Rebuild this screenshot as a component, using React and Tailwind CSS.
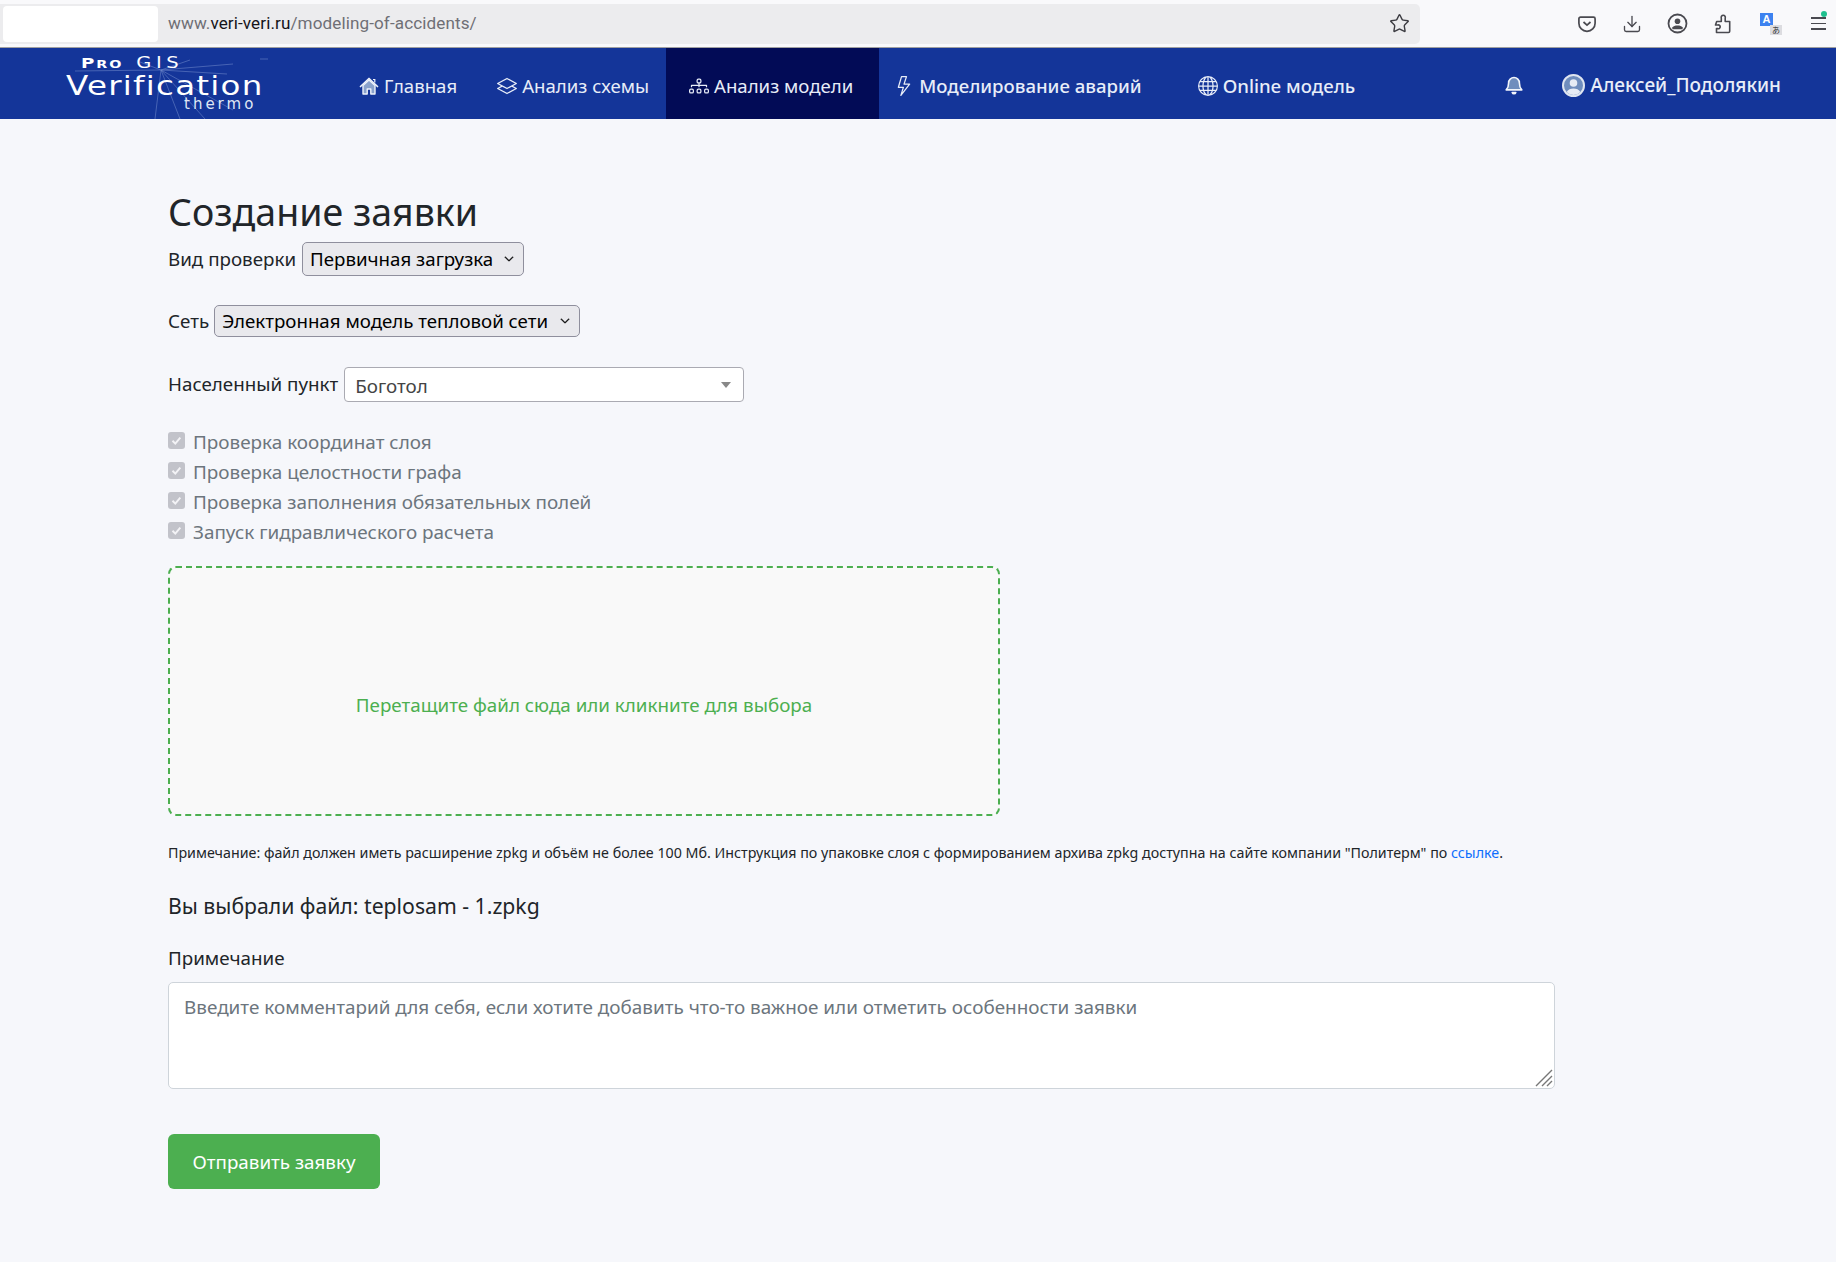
// App.jsx
// Заявка на проверку: browser chrome strip, top nav and the request form
import React from 'react';
import { BsLayers, BsDiagram3, BsLightning, BsGlobe, BsChevronDown } from 'react-icons/bs';
import { Star, Download } from 'lucide-react';

const FONT = 'font-["Noto_Sans",sans-serif]';

const HouseIcon = ({ className }) => (
  <svg className={className} viewBox="0 0 20 20" fill="none">
    <path d="M4 9.5V18h4.2v-5h3.6v5H16V9.5L10 4z" fill="#8aa2cc" stroke="#eef2fa" strokeWidth="1.4" strokeLinejoin="round" />
    <path d="M1.5 10.5L10 2.5l8.5 8" stroke="#eef2fa" strokeWidth="1.7" strokeLinecap="round" strokeLinejoin="round" />
    <path d="M14 3.5h1.8v3" stroke="#eef2fa" strokeWidth="1.2" />
  </svg>
);

const navItems = [
  { label: 'Главная', icon: HouseIcon, cls: 'pl-[22px] pr-[40px]' },
  { label: 'Анализ схемы', icon: BsLayers, cls: 'pr-[17px]' },
  { label: 'Анализ модели', icon: BsDiagram3, cls: 'pl-[23px] pr-[26px] bg-[#020b56]' },
  { label: 'Моделирование аварий', icon: BsLightning, cls: 'pl-[15px] pr-[56px] font-medium' },
  { label: 'Online модель', icon: BsGlobe, cls: 'font-medium' },
];

const checks = [
  'Проверка координат слоя',
  'Проверка целостности графа',
  'Проверка заполнения обязательных полей',
  'Запуск гидравлического расчета',
];

const Logo = () => (
  <div className="relative w-[337px] h-full shrink-0 overflow-hidden">
    <svg className="absolute left-[55px] top-0 w-[230px] h-[71px]" viewBox="0 0 230 71" fill="none" stroke="#8ea4dc" strokeWidth="0.6" opacity="0.7">
      <path d="M106 22 L135 12 M106 22 L178 16 M106 22 L172 26 M106 22 L20 23 M106 22 L125 71 M106 22 L150 71 M106 22 L178 62 M106 22 L100 71 M106 22 L85 14 M205 11h8" />
    </svg>
    <div className='absolute left-[81px] top-[6px] h-[16px] text-white leading-[16px] font-bold tracking-[1.5px] whitespace-nowrap origin-left scale-x-[1.3] font-["DejaVu_Sans",sans-serif]'>
      <span className="text-[14px]">P</span><span className="text-[11px]">RO</span><span className="ml-[10px] font-normal text-[15px] tracking-[3.5px]">GIS</span>
    </div>
    <div className='absolute left-[66px] top-[25px] h-[26px] text-white text-[26px] leading-[26px] tracking-[1px] origin-left scale-x-[1.25] font-["DejaVu_Sans",sans-serif]'>Verification</div>
    <div className='absolute left-[184px] top-[50px] h-[12px] text-[#dfe6f4] text-[15px] leading-[12px] tracking-[3px] font-["DejaVu_Sans",sans-serif]'>thermo</div>
  </div>
);

const Select = ({ label, value, className, gap }) => (
  <div className={`flex items-center text-[18.8px] text-[#212529] ${gap}`}>
    <span className="pt-[1px]">{label}</span>
    <div className={`flex items-center justify-between bg-[#e9e9ed] border border-[#8f8f9d] rounded-[5px] text-black text-[18.7px] pl-[7px] pr-[9px] ${className}`}>
      <span className="pt-[1px]">{value}</span>
      <BsChevronDown className="w-[10px] h-[10px]" strokeWidth="1.2" />
    </div>
  </div>
);

export default function App() {
  return (
    <div className={`min-h-[1262px] bg-[#f6f7fb] ${FONT}`}>
      {/* browser toolbar */}
      <div className="flex items-center h-[48px] bg-[#f9f9fb] border-b border-[#a0a0a0]">
        <div className="flex items-center w-[1420px] h-[40px] bg-[#ececee] rounded-r-[5px]">
          <div className="w-[155px] h-[36px] ml-[3px] bg-white rounded-[4px]" />
          <div className='ml-[10px] flex-1 text-[17.1px] text-[#6f6f75] font-["Roboto",sans-serif] tracking-[0.1px]'>
            www.<span className="text-[#15141a]">veri-veri.ru</span>/modeling-of-accidents/
          </div>
          <Star className="w-[21px] h-[21px] mr-[10px] text-[#3c3c42]" strokeWidth={1.6} />
        </div>
        <div className="flex items-center flex-1 pl-[157px] text-[#4a4a50]">
          <svg className="w-[20px] h-[20px]" viewBox="0 0 20 20" fill="none" stroke="currentColor" strokeWidth="1.7">
            <path d="M3.5 3.2h13a1.6 1.6 0 0 1 1.6 1.6v4.4a8.1 8.1 0 0 1-16.2 0V4.8a1.6 1.6 0 0 1 1.6-1.6z" />
            <path d="M6.5 8l3.5 3.2L13.5 8" />
          </svg>
          <Download className="w-[20px] h-[20px] ml-[25px]" strokeWidth={1.6} />
          <svg className="w-[21px] h-[21px] ml-[25px]" viewBox="0 0 21 21" fill="none">
            <circle cx="10.5" cy="10.5" r="9" stroke="currentColor" strokeWidth="1.8" />
            <circle cx="10.5" cy="8.2" r="2.8" fill="currentColor" />
            <path d="M4.8 15c1.5-1.8 3.5-2.4 5.7-2.4s4.2.6 5.7 2.4l-1.3 1.3H6.1z" fill="currentColor" />
          </svg>
          <svg className="w-[20px] h-[20px] ml-[25px]" viewBox="0 0 20 20" fill="none" stroke="currentColor" strokeWidth="1.6" strokeLinejoin="round">
            <path d="M2.5 11h2.2a1.9 1.9 0 1 1 0 3.6H3.5V18.5h12a1.2 1.2 0 0 0 1.2-1.2V7.5h-4.5V4.2a2.1 2.1 0 1 0-3.9 0v3.3H3.7z" />
          </svg>
          <div className="relative w-[22px] h-[22px] ml-[27px]">
            <div className='flex items-center justify-center w-[13px] h-[13px] bg-[#3d82f0] text-white text-[11px] font-bold font-["Liberation_Sans",sans-serif]'>A</div>
            <div className='absolute right-0 bottom-0 w-[12px] h-[10px] bg-[#dcdce0] text-[8px] leading-[10px] text-center text-[#333] font-["Noto_Sans_CJK_JP",sans-serif]'>あ</div>
          </div>
          <div className="relative ml-[29px] flex flex-col gap-[4px] w-[15px]">
            <span className="h-[1.5px] bg-[#4a4a50]" />
            <span className="h-[1.5px] bg-[#4a4a50]" />
            <span className="h-[1.5px] bg-[#4a4a50]" />
            <span className="absolute right-[-1px] top-[-6px] w-[6px] h-[6px] rounded-full bg-[#1fc08e]" />
          </div>
        </div>
      </div>

      {/* top nav */}
      <nav className="flex items-stretch h-[71px] bg-[#143599] text-[#e8edf8] text-[18.6px]">
        <Logo />
        {navItems.map(({ label, icon: Icon, cls }) => (
          <a key={label} className={`flex items-center pt-[4px] ${cls}`}>
            <Icon className="w-[20px] h-[20px] mr-[5px]" />
            <span>{label}</span>
          </a>
        ))}
        <div className="flex items-center ml-auto pt-[4px] pr-[55px] font-medium text-[19px]">
          <svg className="w-[20px] h-[21px] mr-[38px]" viewBox="0 0 20 21" fill="#6f8dbd" stroke="#f2f5fb" strokeWidth="1.6" strokeLinejoin="round">
            <path d="M10 2.5a5.4 5.4 0 0 0-5.4 5.4c0 4-1.1 5.6-2.4 7h15.6c-1.3-1.4-2.4-3-2.4-7A5.4 5.4 0 0 0 10 2.5z" />
            <path d="M8.2 17.5a1.9 1.9 0 0 0 3.6 0z" fill="#f2f5fb" />
          </svg>
          <svg className="w-[23px] h-[23px] mr-[5px]" viewBox="0 0 23 23">
            <circle cx="11.5" cy="11.5" r="10.5" fill="#6f8dbd" stroke="#dfe5f0" strokeWidth="2" />
            <circle cx="11.5" cy="9" r="3.8" fill="#e6ebf4" />
            <path d="M4.6 18c1.4-2.6 4-3.6 6.9-3.6s5.5 1 6.9 3.6a9.6 9.6 0 0 1-13.8 0z" fill="#e6ebf4" />
          </svg>
          <span>Алексей_Подолякин</span>
        </div>
      </nav>

      {/* form */}
      <main className="pl-[168px] pt-[65px]">
        <h1 className="text-[37.5px] leading-[56px] text-[#212529]">Создание заявки</h1>
        <Select label="Вид проверки" value="Первичная загрузка" gap="gap-[6px] mt-[2px]" className="w-[222px] h-[34px]" />
        <Select label="Сеть" value="Электронная модель тепловой сети" gap="gap-[5px] mt-[29px]" className="w-[366px] h-[32px]" />
        <div className="flex items-center gap-[6px] mt-[30px] text-[18.8px] text-[#212529]">
          <span>Населенный пункт</span>
          <div className="flex items-center justify-between w-[400px] h-[35px] pl-[10px] pr-[12px] bg-white border border-[#aaaab2] rounded-[4px] text-[#444]">
            <span className="mt-[3px]">Боготол</span>
            <span className="w-0 h-0 border-x-[5px] border-x-transparent border-t-[6px] border-t-[#888]" />
          </div>
        </div>

        <div className="flex flex-col gap-[2px] mt-[26px]">
          {checks.map(text => (
            <label key={text} className="flex items-center h-[28px] text-[18.9px] text-[#6c757d]">
              <span className="flex items-center justify-center w-[17px] h-[17px] mb-[4px] rounded-[3px] bg-[#c2c3ca]">
                <svg className="w-[13px] h-[13px]" viewBox="0 0 13 13" fill="none" stroke="#f3f3f6" strokeWidth="2">
                  <path d="M2.5 6.8l2.8 2.8 5-6" />
                </svg>
              </span>
              <span className="ml-[8px]">{text}</span>
            </label>
          ))}
        </div>

        <div className="flex items-center justify-center w-[832px] h-[250px] mt-[20px] pt-[29px] bg-[#f9f9f9] border-2 border-dashed border-[#4caf50] rounded-[8px] text-[18.8px] text-[#4caf50]">
          Перетащите файл сюда или кликните для выбора
        </div>

        <p className="mt-[26px] text-[14.25px] leading-[22px] text-[#212529]">
          Примечание: файл должен иметь расширение zpkg и объём не более 100 Мб. Инструкция по упаковке слоя с формированием архива zpkg доступна на сайте компании "Политерм" по <a className="text-[#0d6efd]">ссылке</a>.
        </p>

        <div className="mt-[27px] text-[21.2px] leading-[30px] text-[#212529]">Вы выбрали файл: teplosam - 1.zpkg</div>

        <div className="mt-[23px] text-[18.8px] leading-[28px] text-[#212529]">Примечание</div>
        <div className="relative w-[1387px] h-[107px] mt-[10px]">
          <textarea
            className="block w-full h-full resize-none px-[15px] pt-[10px] pb-[8px] bg-white border border-[#ced4da] rounded-[5px] text-[18.9px] placeholder:text-[#6c757d]"
            placeholder="Введите комментарий для себя, если хотите добавить что-то важное или отметить особенности заявки"
          />
          <svg className="absolute right-[2px] bottom-[2px] w-[18px] h-[18px]" viewBox="0 0 18 18" stroke="#777" strokeWidth="1.4">
            <path d="M1 17L17 1M7 17L17 7M12 17l5-5" />
          </svg>
        </div>

        <button className="block w-[212px] h-[55px] mt-[45px] pt-[2px] bg-[#4caf50] rounded-[6px] text-white text-[18.8px]">Отправить заявку</button>
      </main>
    </div>
  );
}
